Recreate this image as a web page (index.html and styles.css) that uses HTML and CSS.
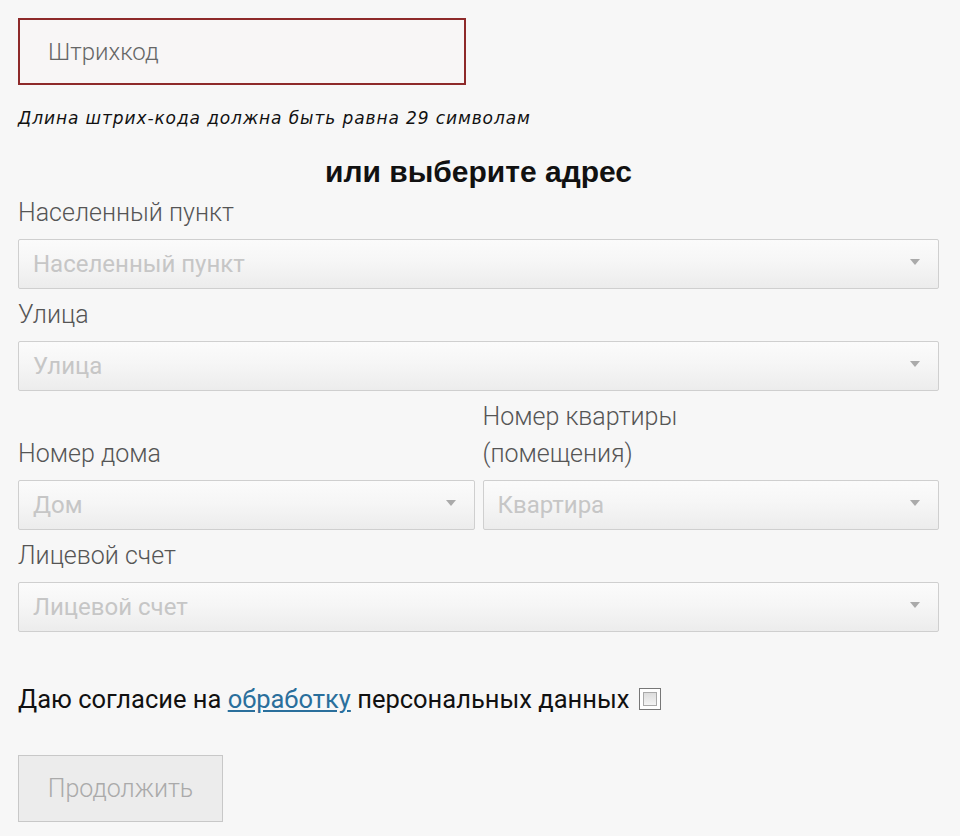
FILE: index.html
```html
<!DOCTYPE html>
<html lang="ru">
<head>
<meta charset="utf-8">
<link rel="stylesheet" href="styles.css">
</head>
<body>
<div class="form">
  <div class="barcode"><span class="barcode-ph">Штрихкод</span></div>
  <p class="hint">Длина штрих-кода должна быть равна 29 символам</p>
  <h2 class="title">или выберите адрес</h2>

  <div class="label">Населенный пункт</div>
  <div class="select"><span class="ph">Населенный пункт</span><span class="arrow"></span></div>

  <div class="label">Улица</div>
  <div class="select"><span class="ph">Улица</span><span class="arrow"></span></div>

  <div class="row">
    <div class="col">
      <div class="label">Номер дома</div>
      <div class="select"><span class="ph">Дом</span><span class="arrow"></span></div>
    </div>
    <div class="col">
      <div class="label">Номер квартиры<br>(помещения)</div>
      <div class="select"><span class="ph">Квартира</span><span class="arrow"></span></div>
    </div>
  </div>

  <div class="label">Лицевой счет</div>
  <div class="select"><span class="ph">Лицевой счет</span><span class="arrow"></span></div>

  <div class="consent"><span>Даю согласие на <a href="#" class="link">обработку</a> персональных данных</span><span class="checkbox"><span class="checkbox-in"></span></span></div>

  <div class="btn">Продолжить</div>
</div>
</body>
</html>
```

FILE: styles.css
```css
html, body {
  margin: 0;
  padding: 0;
  background: #f7f7f7;
}
body {
  font-family: Roboto, "Liberation Sans", sans-serif;
  color: #555;
}
.form {
  width: 921px;
  padding: 18px 0 0 18px;
  display: flex;
  flex-direction: column;
}
.barcode {
  width: 416px;
  height: 63px;
  border: 2px solid #8e2a2a;
  display: flex;
  align-items: center;
  padding-left: 28px;
  background: #f8f6f6;
}
.barcode-ph {
  font-size: 24px;
  font-weight: 300;
  color: #666;
}
.hint {
  margin: 23px 0 0 0;
  font-family: "DejaVu Sans", sans-serif;
  font-style: italic;
  font-size: 17px;
  letter-spacing: 0.9px;
  color: #111;
  line-height: 20px;
}
.title {
  margin: 29px 0 0 0;
  text-align: center;
  font-family: "Liberation Sans", Arial, sans-serif;
  font-weight: bold;
  font-size: 30px;
  line-height: 30px;
  color: #111;
}
.label {
  font-size: 25px;
  font-weight: 300;
  color: #555;
  line-height: 37px;
  padding: 7px 0 8px;
}
.select {
  height: 48px;
  border: 1px solid #cfcfcf;
  border-radius: 2px;
  background: linear-gradient(#fbfbfb 0%, #f6f6f6 45%, #ececec 100%);
  display: flex;
  align-items: center;
  justify-content: space-between;
  padding: 0 18px 0 14px;
}
.ph {
  font-size: 24px;
  color: #c6c6c6;
  font-weight: 400;
}
.arrow {
  width: 0;
  height: 0;
  border-left: 5px solid transparent;
  border-right: 5px solid transparent;
  border-top: 6px solid #aaa;
  margin-top: -4px;
}
.row {
  display: flex;
  gap: 8px;
}
.col {
  flex: 1;
  display: flex;
  flex-direction: column;
  justify-content: flex-end;
}
.consent {
  margin-top: 52px;
  font-size: 25.5px;
  color: #111;
  font-weight: 400;
  display: flex;
  align-items: center;
  line-height: 30px;
}
.link {
  color: #2a6f9c;
  text-decoration: underline;
}
.checkbox {
  margin-left: 10px;
  width: 20px;
  height: 20px;
  border: 1px solid #777;
  background: #fff;
  display: flex;
  align-items: center;
  justify-content: center;
}
.checkbox-in {
  width: 14px;
  height: 14px;
  border: 1px solid #aaa;
  box-sizing: border-box;
  background: linear-gradient(#ddd, #f4f4f4);
}
.btn {
  margin-top: 41px;
  width: 203px;
  height: 65px;
  border: 1px solid #c8c8c8;
  background: #ececec;
  display: flex;
  align-items: center;
  justify-content: center;
  font-size: 25px;
  color: #aaa;
  font-weight: 300;
}
```
